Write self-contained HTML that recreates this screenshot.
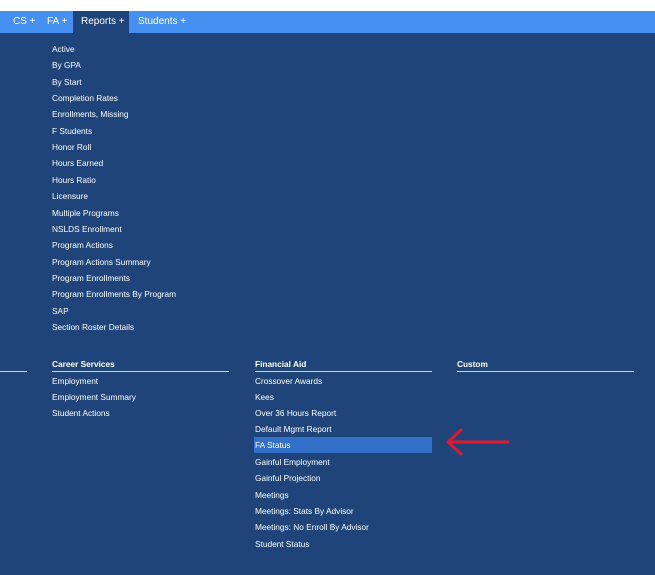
<!DOCTYPE html>
<html><head><style>
body{margin:0;width:655px;height:574px;background:#1e4479;font-family:"Liberation Sans",sans-serif;overflow:hidden;position:relative;color:#fff}
.top{position:absolute;left:0;top:0;width:655px;height:11px;background:#fff}
.nav{position:absolute;left:0;top:11px;width:655px;height:22px;background:#4690f2;font-size:10px}
.nav span{position:absolute;top:5px}
.rep{position:absolute;left:73px;top:0;width:56px;height:22px;background:#1e4479}
.it{position:absolute;font-size:8.3px;white-space:nowrap;line-height:12px}
.h{position:absolute;font-size:8.3px;font-weight:bold;line-height:12px}
.ln{position:absolute;height:1px;background:#c8d4e8}
.hl{position:absolute;left:254px;top:437px;width:178px;height:16px;background:#3370c9}
.c{position:absolute;left:0;top:1px;width:655px;height:574px}
</style></head><body>
<div class="top"></div>
<div class="nav"><div class="rep"></div>
<span style="left:13px">CS +</span><span style="left:47px">FA +</span><span style="left:81px">Reports +</span><span style="left:138px">Students +</span></div>
<div class="c">
<div class="it" style="left:52px;top:32px;height:1px;overflow:hidden">Master</div>
<div class="it" style="left:52px;top:42px">Active</div>
<div class="it" style="left:52px;top:58px">By GPA</div>
<div class="it" style="left:52px;top:75px">By Start</div>
<div class="it" style="left:52px;top:91px">Completion Rates</div>
<div class="it" style="left:52px;top:107px">Enrollments, Missing</div>
<div class="it" style="left:52px;top:124px">F Students</div>
<div class="it" style="left:52px;top:140px">Honor Roll</div>
<div class="it" style="left:52px;top:156px">Hours Earned</div>
<div class="it" style="left:52px;top:173px">Hours Ratio</div>
<div class="it" style="left:52px;top:189px">Licensure</div>
<div class="it" style="left:52px;top:206px">Multiple Programs</div>
<div class="it" style="left:52px;top:222px">NSLDS Enrollment</div>
<div class="it" style="left:52px;top:238px">Program Actions</div>
<div class="it" style="left:52px;top:255px">Program Actions Summary</div>
<div class="it" style="left:52px;top:271px">Program Enrollments</div>
<div class="it" style="left:52px;top:287px">Program Enrollments By Program</div>
<div class="it" style="left:52px;top:304px">SAP</div>
<div class="it" style="left:52px;top:320px">Section Roster Details</div>

<div class="h" style="left:52px;top:357px">Career Services</div>
<div class="h" style="left:255px;top:357px">Financial Aid</div>
<div class="h" style="left:457px;top:357px">Custom</div>

<div class="it" style="left:52px;top:374px">Employment</div>
<div class="it" style="left:52px;top:390px">Employment Summary</div>
<div class="it" style="left:52px;top:406px">Student Actions</div>
</div>
<div class="ln" style="left:0;top:371px;width:27px"></div>
<div class="ln" style="left:52px;top:371px;width:177px"></div>
<div class="ln" style="left:255px;top:371px;width:177px"></div>
<div class="ln" style="left:457px;top:371px;width:177px"></div>

<div class="hl"></div>
<div class="c">
<div class="it" style="left:255px;top:374px">Crossover Awards</div>
<div class="it" style="left:255px;top:390px">Kees</div>
<div class="it" style="left:255px;top:406px">Over 36 Hours Report</div>
<div class="it" style="left:255px;top:422px">Default Mgmt Report</div>
<div class="it" style="left:255px;top:438px">FA Status</div>
<div class="it" style="left:255px;top:455px">Gainful Employment</div>
<div class="it" style="left:255px;top:471px">Gainful Projection</div>
<div class="it" style="left:255px;top:488px">Meetings</div>
<div class="it" style="left:255px;top:504px">Meetings: Stats By Advisor</div>
<div class="it" style="left:255px;top:520px">Meetings: No Enroll By Advisor</div>
<div class="it" style="left:255px;top:537px">Student Status</div>
</div>
<svg style="position:absolute;left:440px;top:425px" width="75" height="36"><path d="M9 17 L68 17 M21 5 L8 17 L21 29" stroke="#e0192e" stroke-width="3" fill="none" stroke-linecap="round" stroke-linejoin="round"/></svg>
</body></html>
